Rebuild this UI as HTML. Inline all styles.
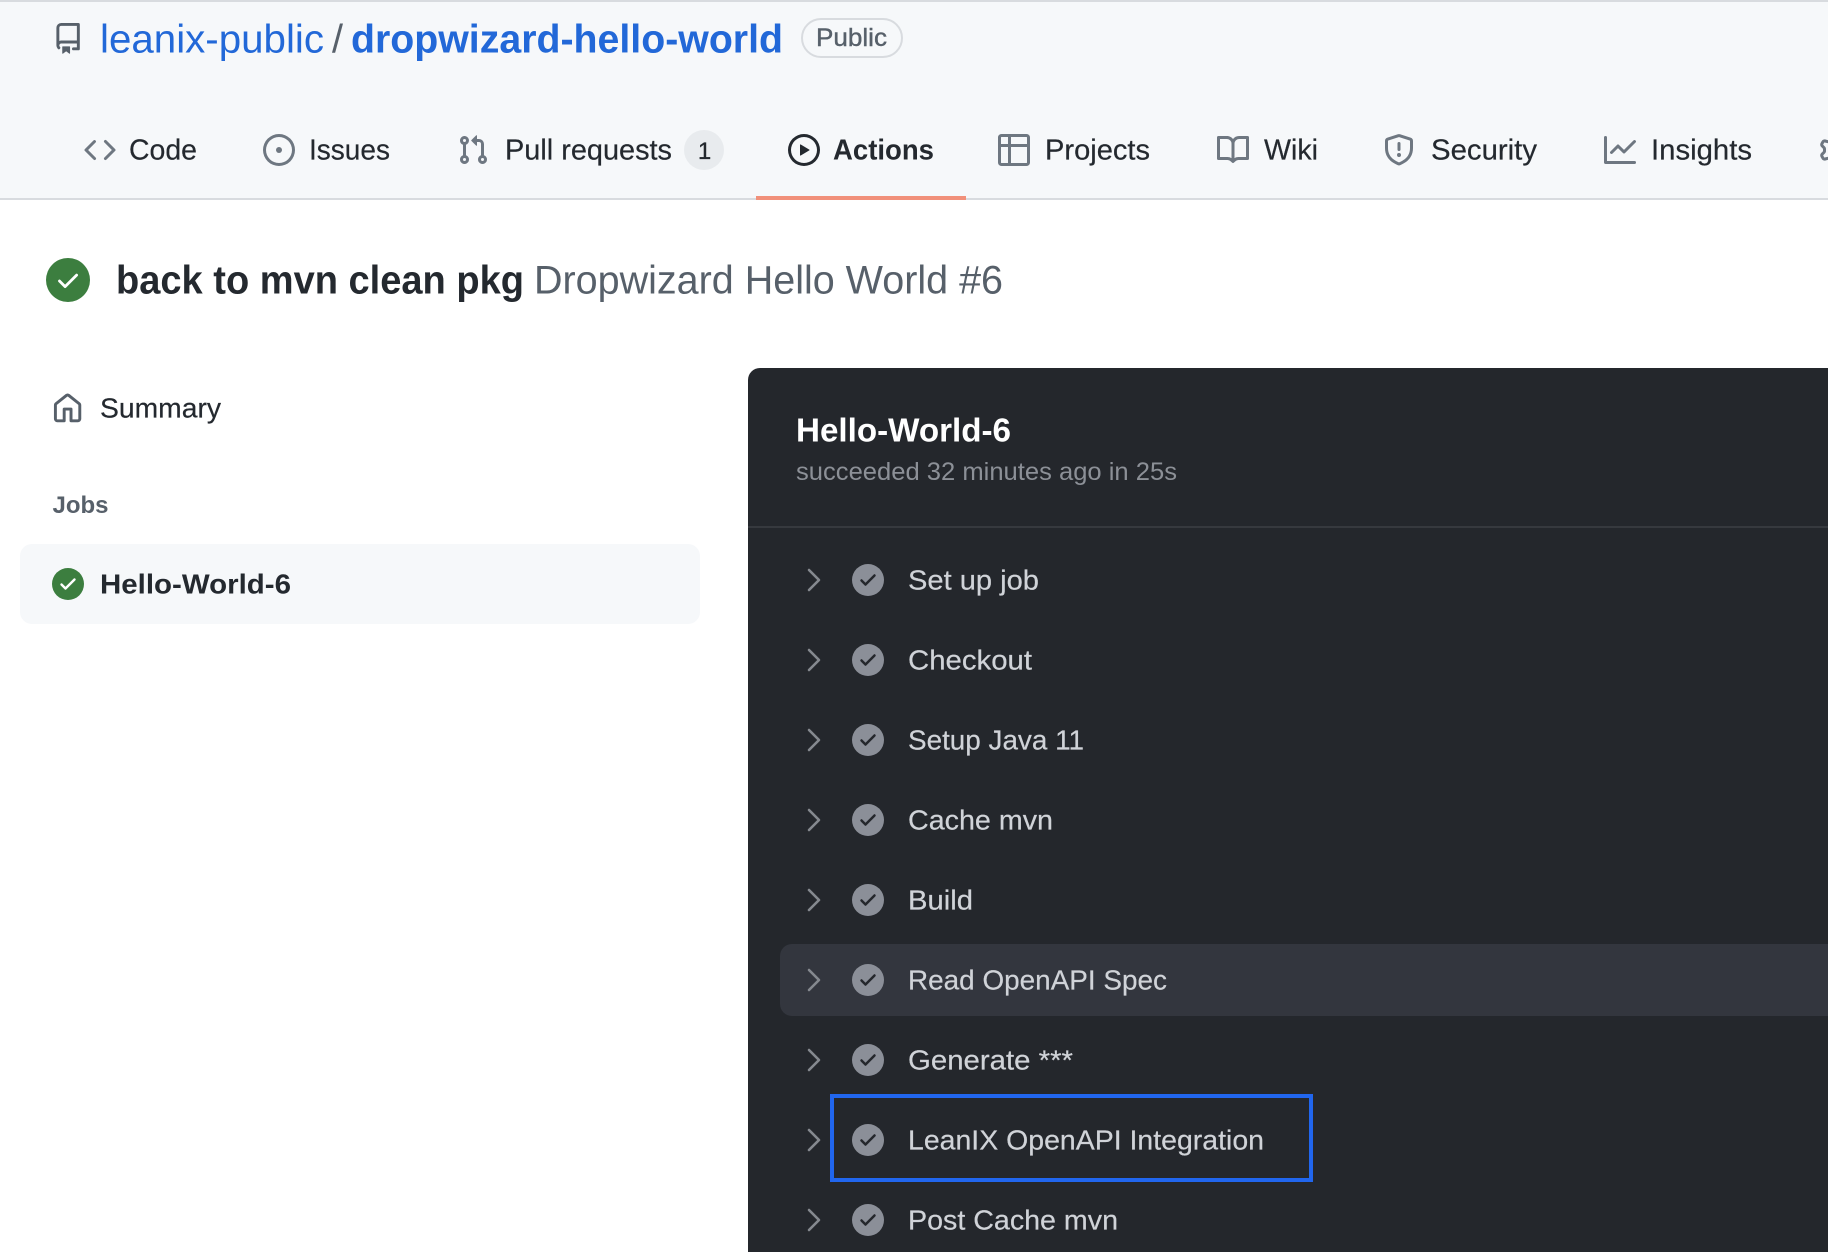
<!DOCTYPE html>
<html lang="en">
<head>
<meta charset="utf-8">
<title>back to mvn clean pkg · Dropwizard Hello World #6</title>
<style>
html,body{margin:0;padding:0;background:#fff;width:1828px;height:1252px;overflow:hidden}
svg{display:block}
text{font-family:"Liberation Sans",sans-serif;white-space:pre}
.tab{font-size:28.5px;fill:#24292f;stroke:#24292f;stroke-width:.2}
.step{font-size:28px;fill:#d0d3d8;stroke:#d0d3d8;stroke-width:.2}
.ico{fill:#6e7781}
</style>
</head>
<body>
<svg width="1828" height="1252" viewBox="0 0 1828 1252" xmlns="http://www.w3.org/2000/svg">
<defs>
<g id="st"><circle cx="0" cy="0" r="16" fill="#8b8f98"/><path d="M-6.5 .5l4 4 9-9" fill="none" stroke="currentColor" stroke-width="2.5" stroke-linecap="round" stroke-linejoin="round"/></g>
</defs>
<!-- header -->
<rect x="0" y="0" width="1828" height="198" fill="#f6f8fa"/>
<rect x="0" y="0" width="1828" height="2" fill="#d8dbdf"/>
<rect x="0" y="198" width="1828" height="2" fill="#d8dbdf"/>
<rect x="756" y="196" width="210" height="4" fill="#f1907a"/>

<g transform="translate(52.5 23) scale(1.95)" fill="#57606a"><path fill-rule="evenodd" d="M2 2.5A2.5 2.5 0 014.5 0h8.75a.75.75 0 01.75.75v12.5a.75.75 0 01-.75.75h-2.5a.75.75 0 110-1.5h1.75v-2h-8a1 1 0 00-.714 1.7.75.75 0 01-1.072 1.05A2.495 2.495 0 012 11.5v-9zm10.5-1V9h-8c-.356 0-.694.074-1 .208V2.5a1 1 0 011-1h8zM5 12.25v3.25a.25.25 0 00.4.2l1.45-1.087a.25.25 0 01.3 0L8.6 15.7a.25.25 0 00.4-.2v-3.25a.25.25 0 00-.25-.25h-3.5a.25.25 0 00-.25.25z"/></g>
<text x="100" y="52.5" font-size="40" fill="#2268d8" textLength="224" lengthAdjust="spacingAndGlyphs">leanix-public</text>
<text x="332" y="52.5" font-size="40" fill="#57606a" textLength="11" lengthAdjust="spacingAndGlyphs">/</text>
<text x="351" y="52.5" font-size="40" font-weight="700" fill="#2268d8" textLength="432" lengthAdjust="spacingAndGlyphs">dropwizard-hello-world</text>
<rect x="802" y="19" width="100" height="38" rx="19" fill="none" stroke="#d8dbdf" stroke-width="2"/>
<text x="816" y="46" font-size="25" fill="#57606a" textLength="71" lengthAdjust="spacingAndGlyphs" stroke="#57606a" stroke-width=".4">Public</text>

<!-- tabs -->
<g transform="translate(84 134) scale(2)" class="ico"><path fill-rule="evenodd" d="M4.72 3.22a.75.75 0 011.06 1.06L2.06 8l3.72 3.72a.75.75 0 11-1.06 1.06L.47 8.53a.75.75 0 010-1.06l4.25-4.25zm6.56 0a.75.75 0 10-1.06 1.06L13.94 8l-3.72 3.72a.75.75 0 101.06 1.06l4.25-4.25a.75.75 0 000-1.06l-4.25-4.25z"/></g>
<text class="tab" x="129" y="159.5" textLength="68" lengthAdjust="spacingAndGlyphs">Code</text>

<g transform="translate(263 134) scale(2)" class="ico"><path d="M8 9.5a1.5 1.5 0 100-3 1.5 1.5 0 000 3z"/><path fill-rule="evenodd" d="M8 0a8 8 0 100 16A8 8 0 008 0zM1.5 8a6.5 6.5 0 1113 0 6.5 6.5 0 01-13 0z"/></g>
<text class="tab" x="309" y="159.5" textLength="81" lengthAdjust="spacingAndGlyphs">Issues</text>

<g transform="translate(457 134) scale(2)" class="ico"><path fill-rule="evenodd" d="M7.177 3.073L9.573.677A.25.25 0 0110 .854v4.792a.25.25 0 01-.427.177L7.177 3.427a.25.25 0 010-.354zM3.75 2.5a.75.75 0 100 1.5.75.75 0 000-1.5zm-2.25.75a2.25 2.25 0 113 2.122v5.256a2.251 2.251 0 11-1.5 0V5.372A2.25 2.25 0 011.5 3.25zM11 2.5h-1V4h1a1 1 0 011 1v5.628a2.251 2.251 0 101.5 0V5A2.5 2.5 0 0011 2.5zm1 10.25a.75.75 0 111.5 0 .75.75 0 01-1.5 0zM3.75 12a.75.75 0 100 1.5.75.75 0 000-1.5z"/></g>
<text class="tab" x="505" y="159.5" textLength="167" lengthAdjust="spacingAndGlyphs">Pull requests</text>
<rect x="684" y="130" width="40" height="40" rx="20" fill="#e8ebee"/>
<text x="704.5" y="159" font-size="24" fill="#24292f" text-anchor="middle" stroke="#24292f" stroke-width=".3">1</text>

<g transform="translate(788 134) scale(2)" fill="#24292f"><path fill-rule="evenodd" d="M1.5 8a6.5 6.5 0 1113 0 6.5 6.5 0 01-13 0zM8 0a8 8 0 100 16A8 8 0 008 0zM6.379 5.227A.25.25 0 006 5.442v5.117a.25.25 0 00.379.214l4.264-2.559a.25.25 0 000-.428L6.379 5.227z"/></g>
<text class="tab" x="833" y="159.5" font-weight="700" textLength="101" lengthAdjust="spacingAndGlyphs" style="stroke-width:0">Actions</text>

<g transform="translate(998 134) scale(2)" class="ico"><path fill-rule="evenodd" d="M0 1.75C0 .784.784 0 1.75 0h12.5C15.216 0 16 .784 16 1.75v12.5A1.75 1.75 0 0114.25 16H1.75A1.75 1.75 0 010 14.25V1.75zM1.5 6.5v7.75c0 .138.112.25.25.25H5v-8H1.5zM5 5H1.5V1.75a.25.25 0 01.25-.25H5V5zm1.5 1.5v8h7.75a.25.25 0 00.25-.25V6.5h-8zm8-1.5h-8V1.5h7.75a.25.25 0 01.25.25V5z"/></g>
<text class="tab" x="1045" y="159.5" textLength="105" lengthAdjust="spacingAndGlyphs">Projects</text>

<g transform="translate(1217 134) scale(2)" class="ico"><path fill-rule="evenodd" d="M0 1.75A.75.75 0 01.75 1h4.253c1.227 0 2.317.59 3 1.501A3.744 3.744 0 0111.006 1h4.245a.75.75 0 01.75.75v10.5a.75.75 0 01-.75.75h-4.507a2.25 2.25 0 00-1.591.659l-.622.621a.75.75 0 01-1.06 0l-.622-.621A2.25 2.25 0 005.258 13H.75a.75.75 0 01-.75-.75V1.75zm8.755 3a2.25 2.25 0 012.25-2.25H14.5v9h-3.757c-.71 0-1.4.201-1.992.572l.004-7.322zm-1.504 7.324l.004-5.073-.002-2.253A2.25 2.25 0 005.003 2.5H1.5v9h3.757a3.75 3.75 0 011.994.574z"/></g>
<text class="tab" x="1264" y="159.5" textLength="54" lengthAdjust="spacingAndGlyphs">Wiki</text>

<g transform="translate(1383 134) scale(2)" class="ico"><path fill-rule="evenodd" d="M7.467.133a1.75 1.75 0 011.066 0l5.25 1.68A1.75 1.75 0 0115 3.48V7c0 1.566-.32 3.182-1.303 4.682-.983 1.498-2.585 2.813-5.032 3.855a1.7 1.7 0 01-1.33 0c-2.447-1.042-4.049-2.357-5.032-3.855C1.32 10.182 1 8.566 1 7V3.48a1.75 1.75 0 011.217-1.667l5.25-1.68zm.61 1.429a.25.25 0 00-.153 0l-5.25 1.68a.25.25 0 00-.174.238V7c0 1.358.275 2.666 1.057 3.86.784 1.194 2.121 2.34 4.366 3.297a.2.2 0 00.154 0c2.245-.956 3.582-2.104 4.366-3.298C13.225 9.666 13.5 8.36 13.5 7V3.48a.25.25 0 00-.174-.237l-5.25-1.68zM9 10.5a1 1 0 11-2 0 1 1 0 012 0zm-.25-5.75a.75.75 0 10-1.5 0v3a.75.75 0 001.5 0v-3z"/></g>
<text class="tab" x="1431" y="159.5" textLength="106" lengthAdjust="spacingAndGlyphs">Security</text>

<g transform="translate(1604 134) scale(2)" class="ico"><path fill-rule="evenodd" d="M1.5 1.75a.75.75 0 00-1.5 0v12.5c0 .414.336.75.75.75h14.5a.75.75 0 000-1.5H1.5V1.75zm14.28 2.53a.75.75 0 00-1.06-1.06L10 7.94 7.53 5.47a.75.75 0 00-1.06 0L3.22 8.72a.75.75 0 001.06 1.06L7 7.06l2.47 2.47a.75.75 0 001.06 0l5.25-5.25z"/></g>
<text class="tab" x="1651" y="159.5" textLength="101" lengthAdjust="spacingAndGlyphs">Insights</text>

<g transform="translate(1819 134) scale(2)" class="ico"><path fill-rule="evenodd" d="M7.429 1.525a6.593 6.593 0 011.142 0c.036.003.108.036.137.146l.289 1.105c.147.56.55.967.997 1.189.174.086.341.183.501.29.417.278.97.423 1.53.27l1.102-.303c.11-.03.175.016.195.046.219.31.41.641.573.989.014.031.022.11-.059.19l-.815.806c-.411.406-.562.957-.53 1.456a4.588 4.588 0 010 .582c-.032.499.119 1.05.53 1.456l.815.806c.08.08.073.159.059.19a6.494 6.494 0 01-.573.99c-.02.029-.086.074-.195.045l-1.103-.303c-.559-.153-1.112-.008-1.529.27-.16.107-.327.204-.5.29-.449.222-.851.628-.998 1.189l-.289 1.105c-.029.11-.101.143-.137.146a6.613 6.613 0 01-1.142 0c-.036-.003-.108-.037-.137-.146l-.289-1.105c-.147-.56-.55-.967-.997-1.189a4.502 4.502 0 01-.501-.29c-.417-.278-.97-.423-1.53-.27l-1.102.303c-.11.03-.175-.016-.195-.046a6.492 6.492 0 01-.573-.989c-.014-.031-.022-.11.059-.19l.815-.806c.411-.406.562-.957.53-1.456a4.587 4.587 0 010-.582c.032-.499-.119-1.05-.53-1.456l-.815-.806c-.08-.08-.073-.159-.059-.19a6.44 6.44 0 01.573-.99c.02-.029.086-.075.195-.045l1.103.303c.559.153 1.112.008 1.529-.27.16-.107.327-.204.5-.29.449-.222.851-.628.998-1.189l.289-1.105c.029-.11.101-.143.137-.146zM8 0c-.236 0-.47.01-.701.03-.743.065-1.29.615-1.458 1.261l-.29 1.106c-.017.066-.078.158-.211.224a5.994 5.994 0 00-.668.386c-.123.082-.233.09-.3.071L3.27 2.776c-.644-.177-1.392.02-1.82.63a7.977 7.977 0 00-.704 1.217c-.315.675-.111 1.422.363 1.891l.815.806c.05.048.098.147.088.294a6.084 6.084 0 000 .772c.01.147-.038.246-.088.294l-.815.806c-.474.469-.678 1.216-.363 1.891.2.428.436.835.704 1.218.428.609 1.176.806 1.82.63l1.103-.303c.066-.019.176-.011.299.071.213.143.436.272.668.386.133.066.194.158.212.224l.289 1.106c.169.646.715 1.196 1.458 1.26a8.094 8.094 0 001.402 0c.743-.064 1.29-.614 1.458-1.26l.29-1.106c.017-.066.078-.158.211-.224a5.98 5.98 0 00.668-.386c.123-.082.233-.09.3-.071l1.102.302c.644.177 1.392-.02 1.82-.63.268-.382.505-.789.704-1.217.315-.675.111-1.422-.364-1.891l-.814-.806c-.05-.048-.098-.147-.088-.294a6.1 6.1 0 000-.772c-.01-.147.039-.246.088-.294l.814-.806c.475-.469.679-1.216.364-1.891a7.992 7.992 0 00-.704-1.218c-.428-.609-1.176-.806-1.82-.63l-1.103.303c-.066.019-.176.011-.299-.071a5.991 5.991 0 00-.668-.386c-.133-.066-.194-.158-.212-.224L10.16 1.29C9.99.645 9.444.095 8.701.031A8.094 8.094 0 008 0zm1.5 8a1.5 1.5 0 11-3 0 1.5 1.5 0 013 0zM11 8a3 3 0 11-6 0 3 3 0 016 0z"/></g>

<!-- title -->
<circle cx="68" cy="280" r="22" fill="#3c7e3f"/>
<path d="M59.5 281l5.6 5.6 11.5-11.5" fill="none" stroke="#fff" stroke-width="2.8" stroke-linecap="round" stroke-linejoin="round"/>
<text x="116" y="293.5" font-size="39.5" font-weight="700" fill="#24292f" textLength="408" lengthAdjust="spacingAndGlyphs">back to mvn clean pkg</text>
<text x="534" y="293.5" font-size="39.5" fill="#57606a" textLength="469" lengthAdjust="spacingAndGlyphs">Dropwizard Hello World #6</text>

<!-- sidebar -->
<g transform="translate(52 393) scale(1.95)" fill="#57606a"><path fill-rule="evenodd" d="M6.906.664a1.749 1.749 0 012.187 0l5.25 4.2c.415.332.657.835.657 1.367v7.019A1.75 1.75 0 0113.25 15h-3.5a.75.75 0 01-.75-.75V9H7v5.25a.75.75 0 01-.75.75h-3.5A1.75 1.75 0 011 13.25V6.23c0-.531.242-1.034.657-1.366l5.25-4.2zm1.25 1.171a.25.25 0 00-.312 0l-5.25 4.2a.25.25 0 00-.094.196v7.019c0 .138.112.25.25.25H5.5V8.25a.75.75 0 01.75-.75h3.5a.75.75 0 01.75.75v5.25h2.75a.25.25 0 00.25-.25V6.23a.25.25 0 00-.094-.195l-5.25-4.2z"/></g>
<text x="100" y="417.5" font-size="28" fill="#24292f" stroke="#24292f" stroke-width=".2" textLength="121" lengthAdjust="spacingAndGlyphs">Summary</text>
<text x="52.5" y="513" font-size="24.5" font-weight="700" fill="#57606a" textLength="56" lengthAdjust="spacingAndGlyphs">Jobs</text>
<rect x="20" y="544" width="680" height="80" rx="12" fill="#f6f8fa"/>
<circle cx="68" cy="584" r="16" fill="#3c7e3f"/>
<path d="M61.5 584.5l4 4 9-9" fill="none" stroke="#fff" stroke-width="2.4" stroke-linecap="round" stroke-linejoin="round"/>
<text x="100" y="593.5" font-size="28" font-weight="700" fill="#24292f" textLength="191" lengthAdjust="spacingAndGlyphs">Hello-World-6</text>

<!-- dark panel -->
<path d="M748 380a12 12 0 0112-12H1828V1252H748z" fill="#24272c"/>
<text x="796" y="441.5" font-size="33" font-weight="700" fill="#ffffff" textLength="215" lengthAdjust="spacingAndGlyphs">Hello-World-6</text>
<text x="796" y="480" font-size="25" fill="#8c9097" textLength="381" lengthAdjust="spacingAndGlyphs">succeeded 32 minutes ago in 25s</text>
<rect x="748" y="526" width="1080" height="2" fill="#36393e"/>
<path d="M792 944H1828V1016H792a12 12 0 01-12-12V956a12 12 0 0112-12z" fill="#33363e"/>

<g fill="none" stroke="#85898f" stroke-width="2.6" stroke-linecap="round" stroke-linejoin="round">
<path d="M809 570l10 10-10 10"/>
<path d="M809 650l10 10-10 10"/>
<path d="M809 730l10 10-10 10"/>
<path d="M809 810l10 10-10 10"/>
<path d="M809 890l10 10-10 10"/>
<path d="M809 970l10 10-10 10"/>
<path d="M809 1050l10 10-10 10"/>
<path d="M809 1130l10 10-10 10"/>
<path d="M809 1210l10 10-10 10"/>
</g>
<g color="#24272c">
<use href="#st" x="868" y="580"/>
<use href="#st" x="868" y="660"/>
<use href="#st" x="868" y="740"/>
<use href="#st" x="868" y="820"/>
<use href="#st" x="868" y="900"/>
<use href="#st" x="868" y="980"/>
<use href="#st" x="868" y="1060"/>
<use href="#st" x="868" y="1140"/>
<use href="#st" x="868" y="1220"/>
</g>
<text class="step" x="908" y="589.5" textLength="131" lengthAdjust="spacingAndGlyphs">Set up job</text>
<text class="step" x="908" y="669.5" textLength="124" lengthAdjust="spacingAndGlyphs">Checkout</text>
<text class="step" x="908" y="749.5" textLength="176" lengthAdjust="spacingAndGlyphs">Setup Java 11</text>
<text class="step" x="908" y="829.5" textLength="145" lengthAdjust="spacingAndGlyphs">Cache mvn</text>
<text class="step" x="908" y="909.5" textLength="65" lengthAdjust="spacingAndGlyphs">Build</text>
<text class="step" x="908" y="989.5" textLength="259" lengthAdjust="spacingAndGlyphs">Read OpenAPI Spec</text>
<text class="step" x="908" y="1069.5" textLength="165" lengthAdjust="spacingAndGlyphs">Generate ***</text>
<text class="step" x="908" y="1149.5" textLength="356" lengthAdjust="spacingAndGlyphs">LeanIX OpenAPI Integration</text>
<text class="step" x="908" y="1229.5" textLength="210" lengthAdjust="spacingAndGlyphs">Post Cache mvn</text>

<rect x="832" y="1096" width="479" height="84" fill="none" stroke="#2166ee" stroke-width="4"/>
</svg>
</body>
</html>
